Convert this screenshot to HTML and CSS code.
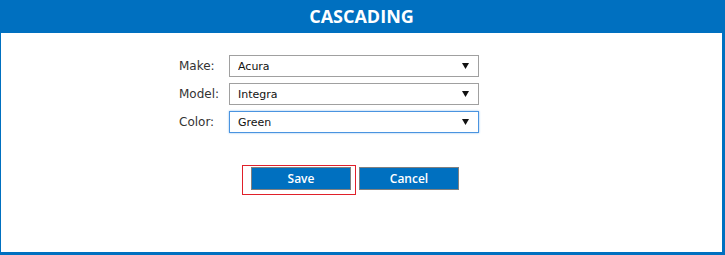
FILE: index.html
```html
<!DOCTYPE html>
<html>
<head>
<meta charset="utf-8">
<link rel="stylesheet" href="styles.css">
</head>
<body>
<div class="frame">
  <div class="header">CASCADING</div>
  <div class="form">
    <label class="lbl">Make:</label>
    <div class="sel">
      <select class="select"><option>Acura</option></select>
      <svg class="arrow" width="7" height="6" viewBox="0 0 7 6"><polygon points="0,0 7,0 3.5,6" fill="#111"/></svg>
    </div>
    <label class="lbl">Model:</label>
    <div class="sel">
      <select class="select"><option>Integra</option></select>
      <svg class="arrow" width="7" height="6" viewBox="0 0 7 6"><polygon points="0,0 7,0 3.5,6" fill="#111"/></svg>
    </div>
    <label class="lbl">Color:</label>
    <div class="sel">
      <select class="select focused"><option>Green</option></select>
      <svg class="arrow" width="7" height="6" viewBox="0 0 7 6"><polygon points="0,0 7,0 3.5,6" fill="#111"/></svg>
    </div>
  </div>
  <div class="actions">
    <span class="focus-ring"><button class="btn">Save</button></span>
    <button class="btn cancel">Cancel</button>
  </div>
</div>
</body>
</html>
```
FILE: styles.css
```css
html, body {
  margin: 0;
  padding: 0;
  background: #fff;
}
.frame {
  box-sizing: border-box;
  width: 725px;
  height: 255px;
  border-left: 1px solid #0070c0;
  border-right: 3px solid #0070c0;
  border-bottom: 3px solid #0070c0;
}
.header {
  height: 33px;
  line-height: 33px;
  background: #0070c0;
  color: #fff;
  text-align: center;
  font-family: "Open Sans", "Liberation Sans", sans-serif;
  font-weight: 700;
  font-size: 18px;
}
.form {
  display: grid;
  grid-template-columns: 50px 250px;
  grid-auto-rows: 22px;
  row-gap: 6px;
  margin: 22px 0 0 178px;
}
.lbl {
  display: flex;
  align-items: center;
  font-family: "DejaVu Sans", Verdana, sans-serif;
  font-size: 12px;
  color: #333;
}
.sel {
  position: relative;
}
.select {
  -webkit-appearance: none;
  appearance: none;
  box-sizing: border-box;
  width: 250px;
  height: 22px;
  margin: 0;
  padding: 1px 0 0 8px;
  border: 1px solid #a0a0a0;
  border-radius: 0;
  background: #fff;
  color: #111;
  font-family: "DejaVu Sans", Verdana, sans-serif;
  font-size: 11px;
  outline: none;
}
.select.focused {
  border-color: #4a94e0;
  box-shadow: 0 0 2px #8fbdec;
}
.arrow {
  position: absolute;
  right: 10px;
  top: 8px;
  pointer-events: none;
}
.actions {
  display: flex;
  align-items: flex-start;
  margin: 32px 0 0 241px;
}
.focus-ring {
  display: block;
  border: 1px solid #e0202a;
  padding: 1px 4px 4px 8px;
}
.btn {
  display: block;
  box-sizing: border-box;
  width: 100px;
  height: 23px;
  margin: 0;
  padding: 0;
  background: #0070c0;
  border: 1px solid #808080;
  color: #fff;
  font-family: "Open Sans", "Liberation Sans", sans-serif;
  font-weight: 600;
  font-size: 12px;
}
.cancel {
  margin: 2px 0 0 3px;
}
```
